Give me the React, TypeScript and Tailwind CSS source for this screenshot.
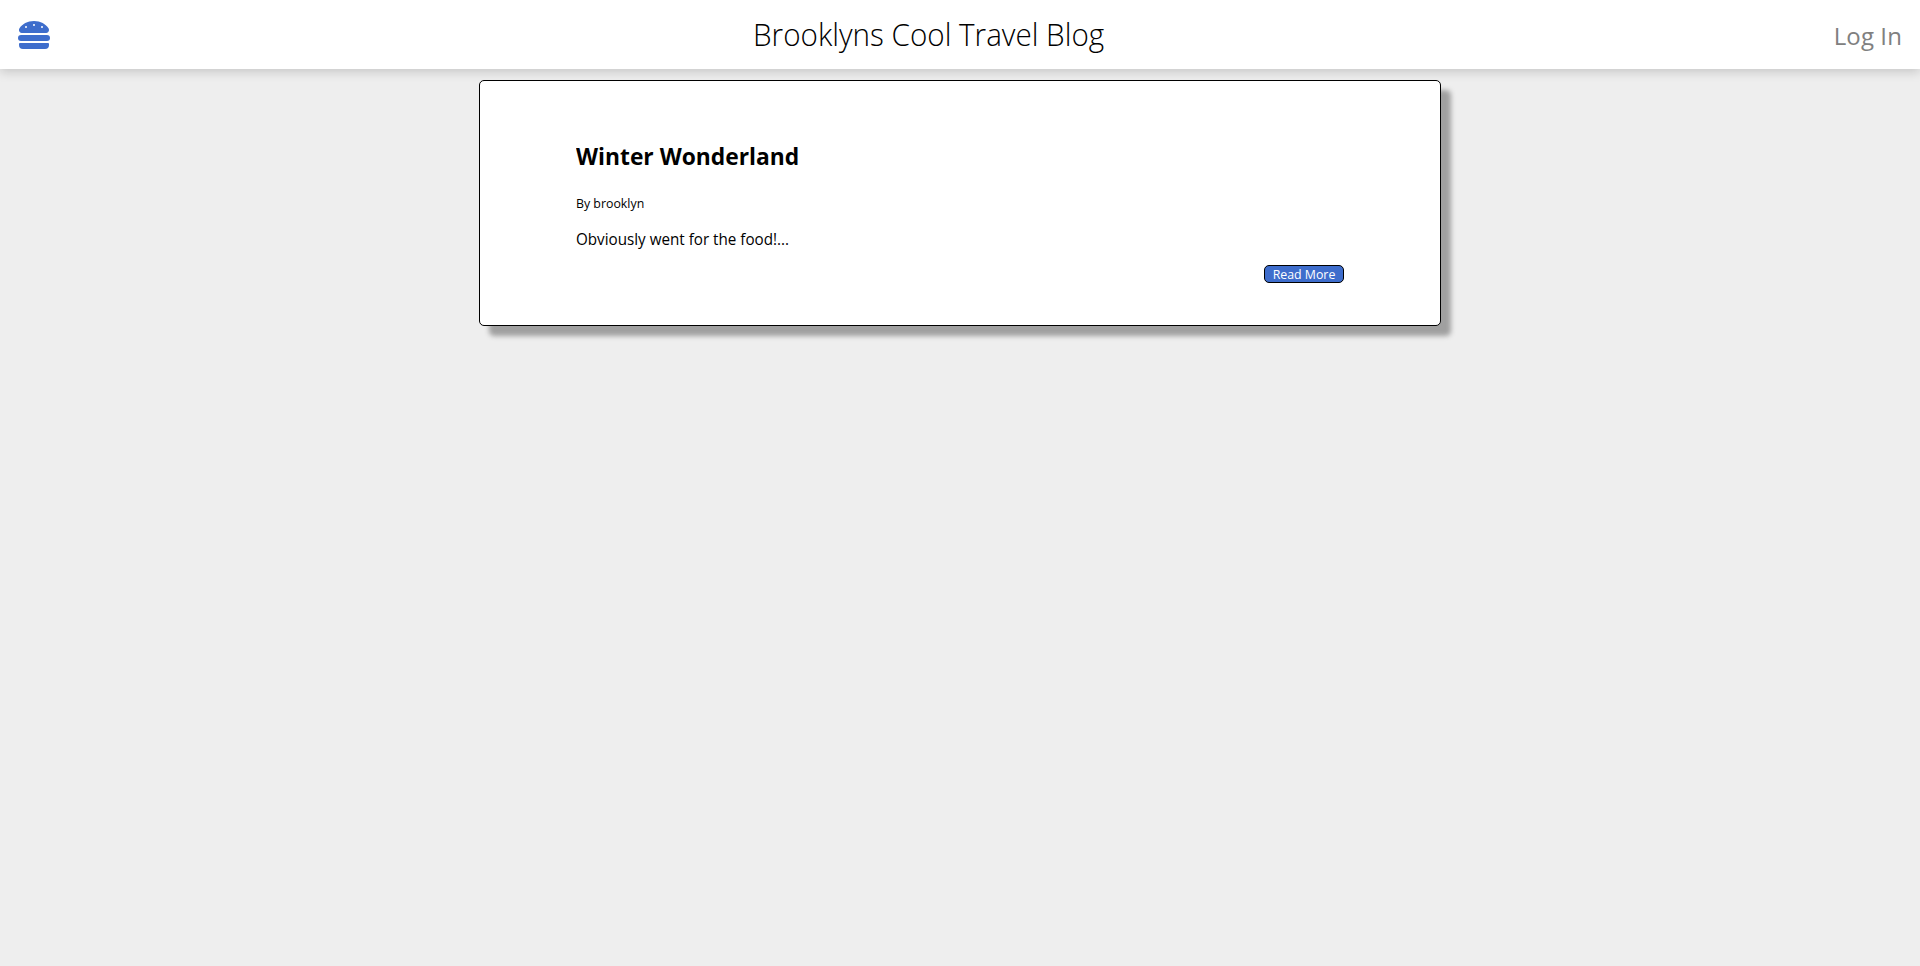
import { FaHamburger } from "react-icons/fa";

function Header() {
  return (
    <header className="relative z-10 flex h-[69px] items-center justify-between bg-white px-[18px] shadow-[0_3px_10px_rgba(0,0,0,0.17)]">
      <FaHamburger className="mt-px h-8 w-8 text-[#3e6dcc]" />
      <h1 className="-mt-[3px] mr-[27px] scale-x-[0.926] whitespace-nowrap text-[32px] font-light leading-[43px] text-black">
        Brooklyns Cool Travel Blog
      </h1>
      <a className="mt-[3px] whitespace-nowrap text-[24px] leading-8 tracking-[0.1px] text-[#808080]">Log In</a>
    </header>
  );
}

function PostCard() {
  return (
    <article className="mx-auto mt-[11px] flex h-[246px] w-[962px] flex-col rounded-[5px] border border-black bg-white px-24 pt-[59px] text-black shadow-[10px_10px_5px_#a0a0a0]">
      <h2 className="origin-left scale-x-[0.95] self-start whitespace-nowrap text-[24px] font-bold leading-8">Winter Wonderland</h2>
      <p className="mt-[22px] origin-left scale-x-[0.95] self-start whitespace-nowrap text-[13px] leading-[18px]">By brooklyn</p>
      <p className="mt-[17px] origin-left scale-x-[0.95] self-start whitespace-nowrap text-[16px] leading-[21px]">Obviously went for the food!...</p>
      <button className="mt-[15px] flex h-[18px] w-20 items-center justify-center self-end whitespace-nowrap rounded-[5px] border border-black bg-[#3e6dcc] text-[13px] leading-4 text-white">
        <span className="inline-block scale-x-[0.95]">Read More</span>
      </button>
    </article>
  );
}

export default function App() {
  return (
    <div className="min-h-screen bg-[#eeeeee] font-['Open_Sans','Noto_Sans',sans-serif]">
      <Header />
      <main className="flow-root">
        <PostCard />
      </main>
    </div>
  );
}
